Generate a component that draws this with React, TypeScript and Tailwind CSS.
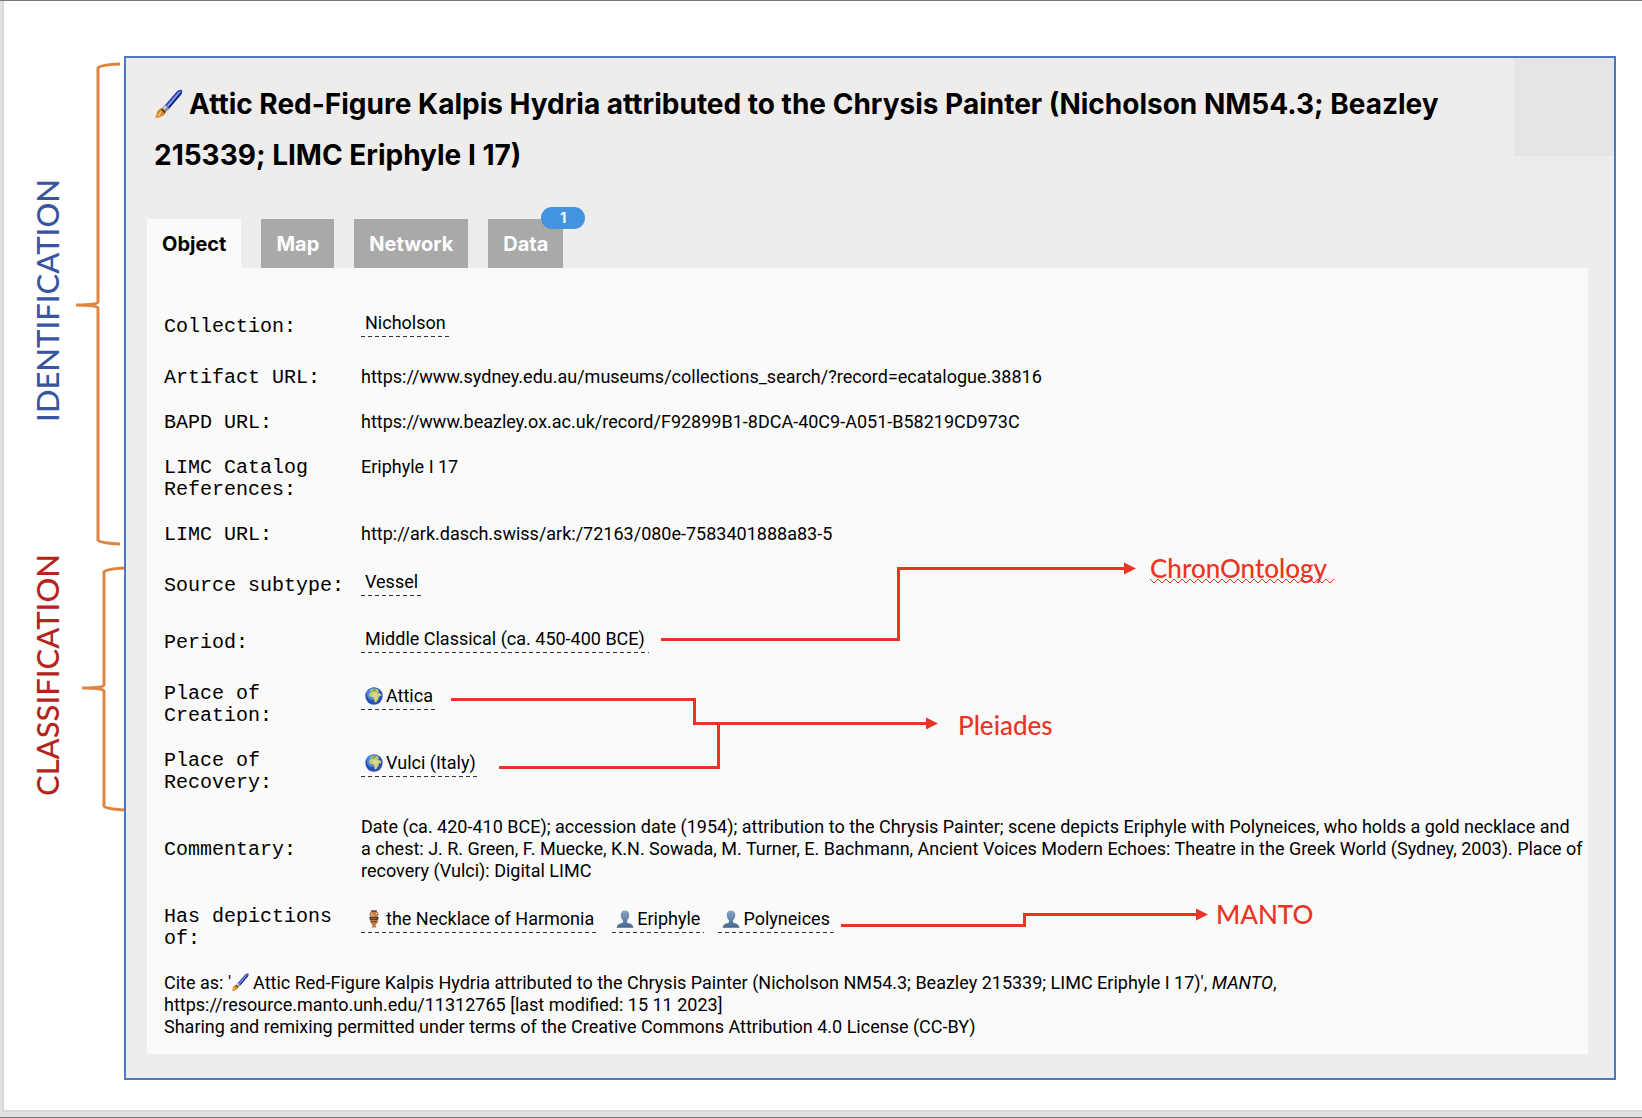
import type { ReactNode } from "react";

const Brush = ({ className }: { className: string }) => (
  <svg viewBox="0 0 30 30" className={className} aria-hidden="true">
    <path d="M11 17 L24 2 Q27 0 29 1 Q30 3 28 6 L15 21 Z" fill="#2740b8" />
    <path d="M13 17.5 L25 3.5 Q27 2 28 2 Q23 8 15 18 Z" fill="#93a8ee" />
    <path d="M15.5 20.5 L28.500 5 L29 2.500 L14.500 19.500 Z" fill="#14206e" />
    <path d="M8 20 L11.500 16 L16 20.500 L12 24 Z" fill="#8d9096" />
    <path d="M9 20 L12 17 L13.500 18.500 L10 21.500 Z" fill="#d9dbe0" />
    <path d="M1 29.500 Q3 27 3 24 Q5 20 8.500 20 L12 23.500 Q11 28 6.500 29 Q4 30 1 29.500 Z" fill="#d98a25" />
    <path d="M3 28.500 Q5 25 8 22 Q8 25 5.500 28 Z" fill="#f6c56b" />
    <path d="M8.500 20 L12 23.500 L11.300 25.500 L7 21 Z" fill="#5a3c1c" />
  </svg>
);

const Globe = () => (
  <svg viewBox="0 0 18 18" className="inline-block size-[18px]" aria-hidden="true">
    <circle cx="9" cy="9" r="8.700" fill="#2a4eb5" />
    <circle cx="8" cy="7" r="6.300" fill="#4f86dc" />
    <path d="M5 3 Q8 1 12.500 2 L14 4.500 L12 5.500 L15.500 6.500 L16.500 9 L14 9.500 L13.500 12 L11 15.500 L9.500 15 L9 11.500 L7 10 L4.500 9.500 L4 7 L6 5 Z" fill="#c6cf72" />
    <path d="M8 6 L12 6.500 L13 9 L11 12 L10 10 L7.500 8.500 Z" fill="#e3d68c" />
    <path d="M6 3 L10 2 L12 3.500 L8 4.800 Z" fill="#7da24b" />
  </svg>
);

const Amphora = () => (
  <svg viewBox="0 0 18 18" className="inline-block size-[18px]" aria-hidden="true">
    <path d="M7 2 Q4.500 2 5.200 5.500 M11 2 Q13.500 2 12.800 5.500" fill="none" stroke="#7a4220" />
    <path d="M6 0.500 H12 L11 3.500 Q13.500 5 13.500 8 Q13.500 12 10.500 15.500 L11.500 17.500 H6.500 L7.500 15.500 Q4.500 12 4.500 8 Q4.500 5 7 3.500 Z" fill="#d07a40" />
    <path d="M6 0.500 H12 L11.600 1.800 H6.400 Z" fill="#5b3220" />
    <path d="M4.600 7 H13.400 L13.100 10 H4.900 Z" fill="#4b3f3c" />
    <path d="M5.500 11.300 H12.500 L12 12.300 H6 Z" fill="#6b3c25" />
    <path d="M6.500 8 H11.500 V9 H6.500 Z" fill="#7c6a62" />
    <path d="M7 4.500 H9 V6 H6 Z" fill="#f0a873" />
  </svg>
);

const Person = () => (
  <svg viewBox="0 0 18 18" className="inline-block size-[18px]" aria-hidden="true">
    <defs>
      <linearGradient id="bust" x1="0" y1="0" x2="0" y2="1">
        <stop offset="0" stopColor="#86a6c6" />
        <stop offset="1" stopColor="#45698f" />
      </linearGradient>
    </defs>
    <path d="M9 0.500 Q13.300 0.500 13.300 5 Q13.300 8.500 11 10.500 V12 Q11.300 13 14 13.600 Q17 14.500 17.500 17.700 H0.500 Q1 14.500 4 13.600 Q6.700 13 7 12 V10.500 Q4.700 8.500 4.700 5 Q4.700 0.500 9 0.500 Z" fill="url(#bust)" />
  </svg>
);

const Chip = ({ icon, children }: { icon?: ReactNode; children: ReactNode }) => (
  <a
    href="#"
    className="mt-1 mb-[6px] inline-flex items-center gap-[3px] bg-[repeating-linear-gradient(90deg,#333_0_4px,transparent_4px_7px)] bg-[length:100%_1px] bg-bottom bg-no-repeat px-1 pb-1 leading-5"
  >
    {icon}
    {children}
  </a>
);

const Row = ({ label, top, children }: { label: string; top?: boolean; children: ReactNode }) => (
  <tr className={top ? "align-top" : "align-middle"}>
    <th
      scope="row"
      className="w-[197px] pt-3 pb-[11px] text-left font-['Liberation_Mono',monospace] text-[20px] leading-[22px] font-normal"
    >
      {label}
    </th>
    <td className="pt-[11px] pb-3">{children}</td>
  </tr>
);

const tabs = [
  { name: "Object", active: true },
  { name: "Map" },
  { name: "Network" },
  { name: "Data", badge: 1 },
];

const Brace = ({ height, middle }: { height: number; middle: number }) => (
  <svg width="45" height={height} className="shrink-0" fill="none" stroke="#e0843f" strokeWidth="3" aria-hidden="true">
    <path
      d={`M44 2 Q22 3 22 6 V${middle - 3} Q22 ${middle} 0 ${middle} Q22 ${middle} 22 ${middle + 3} V${height - 6} Q22 ${height - 3} 44 ${height - 2}`}
    />
  </svg>
);

// Red arrows drawn over the record, measured from the panel's corner
const Arrows = () => (
  <svg
    className="pointer-events-none absolute top-px left-0 h-[780px] w-[1100px]"
    fill="none"
    stroke="#ea3424"
    strokeWidth="3"
    aria-hidden="true"
  >
    <path d="M514 370.500 H751.500 V299.500 H978" />
    <path d="M304 430.500 H547.500 V454.500 H780" />
    <path d="M352 498.500 H571.500 V454.500" />
    <path d="M694 656.500 H877.500 V645.500 H1050" />
    <g fill="#ea3424" stroke="none">
      <path d="M977 293.500 L989 299.500 L977 305.500 Z" />
      <path d="M779 448.500 L791 454.500 L779 460.500 Z" />
      <path d="M1049 639.500 L1061 645.500 L1049 651.500 Z" />
    </g>
  </svg>
);

const Squiggle = () => {
  let d = "M0 1";
  for (let x = 4; x <= 184; x += 4) {
    d += ` L${x} ${x % 8 === 4 ? 5 : 1}`;
  }
  return (
    <svg className="absolute top-[26px] left-0 h-[6px] w-[184px]" fill="none" stroke="#ea3424" aria-hidden="true">
      <path d={d} />
    </svg>
  );
};

const App = () => {
  return (
    <div className="min-h-screen border-t border-b border-[#777777] bg-[#e2e2e2] pb-1 pl-[2px] font-[Inter,sans-serif] text-black">
      <main className="flex items-start border-b-2 border-l-2 border-[#d8d8d8] bg-white pt-[55px] pr-[26px] pb-[30px]">
        <aside className="flex w-[120px] shrink-0 flex-col gap-5 pt-[6px] font-[Lato,sans-serif] text-[31px] leading-[42px] font-medium">
          <div className="flex h-[484px] items-center pl-[22px]">
            <h2 className="mr-2 rotate-180 pt-2 text-[#3a559f] [writing-mode:vertical-rl]">IDENTIFICATION</h2>
            <Brace height={484} middle={243} />
          </div>
          <div className="flex h-[246px] items-center pl-[22px]">
            <h2 className="mr-[14px] rotate-180 pt-7 text-[#b3241a] [writing-mode:vertical-rl]">CLASSIFICATION</h2>
            <Brace height={246} middle={122} />
          </div>
        </aside>

        <section className="relative min-w-0 flex-1 border-2 border-[#4f76c5] bg-[#ededed]">
          <div className="absolute top-0 right-0 h-[98px] w-[100px] bg-[#e5e5e5]" />
          <header className="bg-[#eeedeb] pt-[21px] pr-[105px] pb-4 pl-[28px]">
            <h1 className="text-[28px] leading-[51px] font-bold">
              <Brush className="mr-[6px] inline-block size-[29px] align-[-4px]" />
              Attic Red-Figure Kalpis Hydria attributed to the Chrysis Painter (Nicholson NM54.3; Beazley 215339; LIMC
              Eriphyle I 17)
            </h1>
          </header>

          <div className="pt-[22px] pr-[26px] pb-6 pl-[21px]">
            <nav className="flex gap-5">
              {tabs.map((tab) => (
                <button
                  key={tab.name}
                  type="button"
                  className={
                    tab.active
                      ? "relative h-[49px] bg-[#fafafa] px-[15px] text-[20px] font-bold"
                      : "relative h-[49px] bg-[#a9a9a9] px-[15px] text-[20px] font-bold text-white"
                  }
                >
                  {tab.name}
                  {tab.badge && (
                    <span className="absolute -top-3 -right-[22px] h-[22px] w-11 rounded-full bg-[#4394e0] text-[14px] leading-[22px]">
                      {tab.badge}
                    </span>
                  )}
                </button>
              ))}
            </nav>

            <div className="relative bg-[#fafafa] pt-[30px] pr-[2px] pb-4 pl-[17px] font-[Roboto,sans-serif] text-[18px] leading-[22px]">
              <table className="w-full">
                <tbody>
                  <Row label="Collection:">
                    <Chip>Nicholson</Chip>
                  </Row>
                  <Row label="Artifact URL:">
                    https://www.sydney.edu.au/museums/collections_search/?record=ecatalogue.38816
                  </Row>
                  <Row label="BAPD URL:">https://www.beazley.ox.ac.uk/record/F92899B1-8DCA-40C9-A051-B58219CD973C</Row>
                  <Row label="LIMC Catalog References:" top>
                    Eriphyle I 17
                  </Row>
                  <Row label="LIMC URL:">http://ark.dasch.swiss/ark:/72163/080e-7583401888a83-5</Row>
                  <Row label="Source subtype:">
                    <Chip>Vessel</Chip>
                  </Row>
                  <Row label="Period:">
                    <Chip>Middle Classical (ca. 450-400 BCE)</Chip>
                  </Row>
                  <Row label="Place of Creation:" top>
                    <Chip icon={<Globe />}>Attica</Chip>
                  </Row>
                  <Row label="Place of Recovery:" top>
                    <Chip icon={<Globe />}>Vulci (Italy)</Chip>
                  </Row>
                  <Row label="Commentary:">
                    Date (ca. 420-410 BCE); accession date (1954); attribution to the Chrysis Painter; scene depicts
                    Eriphyle with Polyneices, who holds a gold necklace and
                    <br />
                    a chest: J. R. Green, F. Muecke, K.N. Sowada, M. Turner, E. Bachmann, Ancient Voices Modern Echoes:
                    Theatre in the Greek World (Sydney, 2003). Place of
                    <br />
                    recovery (Vulci): Digital LIMC
                  </Row>
                  <Row label="Has depictions of:" top>
                    <div className="flex gap-[14px]">
                      <Chip icon={<Amphora />}>the Necklace of Harmonia</Chip>
                      <Chip icon={<Person />}>Eriphyle</Chip>
                      <Chip icon={<Person />}>Polyneices</Chip>
                    </div>
                  </Row>
                </tbody>
              </table>
              <p className="pt-[11px]">
                Cite as: '<Brush className="mr-1 inline-block size-[18px] align-[-2px]" />
                Attic Red-Figure Kalpis Hydria attributed to the Chrysis Painter (Nicholson NM54.3; Beazley 215339; LIMC
                Eriphyle I 17)', <em>MANTO</em>,
                <br />
                https://resource.manto.unh.edu/11312765 [last modified: 15 11 2023]
                <br />
                Sharing and remixing permitted under terms of the Creative Commons Attribution 4.0 License (CC-BY)
              </p>

              <Arrows />
              <div className="font-[Lato,sans-serif] text-[26px] leading-8 font-medium text-[#ea3424]">
                <span className="absolute top-[284px] left-[1003px]">
                  ChronOntology
                  <Squiggle />
                </span>
                <span className="absolute top-[441px] left-[811px]">Pleiades</span>
                <span className="absolute top-[630px] left-[1069px]">MANTO</span>
              </div>
            </div>
          </div>
        </section>
      </main>
    </div>
  );
};

export default App;
